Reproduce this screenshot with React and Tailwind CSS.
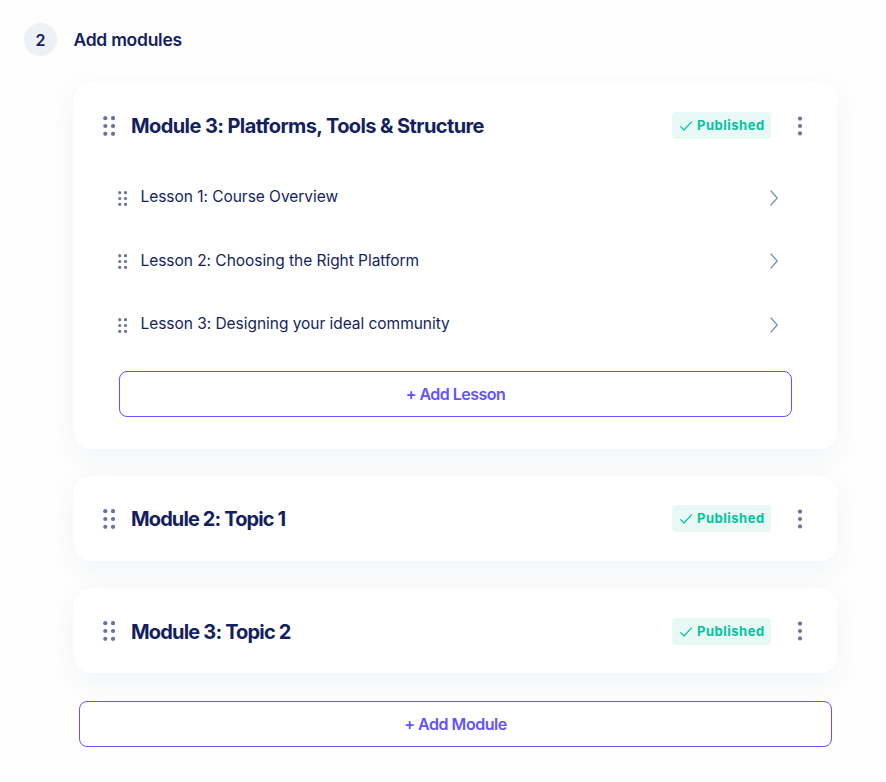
const modules = [
  {
    title: "Module 3: Platforms, Tools & Structure",
    titleClass: "tracking-[-0.59px]",
    lessons: [
      "Lesson 1: Course Overview",
      "Lesson 2: Choosing the Right Platform",
      "Lesson 3: Designing your ideal community",
    ],
  },
  { title: "Module 2: Topic 1", titleClass: "tracking-[-0.88px]" },
  { title: "Module 3: Topic 2", titleClass: "tracking-[-0.82px]" },
];

const DragHandle = ({ className }) => (
  <svg viewBox="0 0 12 20" className={className} fill="currentColor">
    {[2.3, 10].map((cx) =>
      [2.2, 10, 17.8].map((cy) => <circle key={`${cx}-${cy}`} cx={cx} cy={cy} r="2.1" />)
    )}
  </svg>
);

const Kebab = () => (
  <svg viewBox="0 0 4 20" className="w-1 h-5 overflow-visible text-[#68739f]" fill="currentColor">
    <circle cx="2" cy="2.6" r="2.1" />
    <circle cx="2" cy="10" r="2.1" />
    <circle cx="2" cy="17.4" r="2.1" />
  </svg>
);

const PublishedTag = () => (
  <span className="flex items-center w-[99px] h-[27px] pl-2 gap-[5px] rounded bg-[#e8f8f5] text-[#05c3a0]">
    <svg viewBox="0 0 12 10" className="w-3 h-2.5 mt-px shrink-0" fill="none" stroke="currentColor" strokeWidth="1.2" strokeLinecap="round" strokeLinejoin="round">
      <path d="M0.6 5.6 4 9 11.5 0.9" />
    </svg>
    <span className="text-[13px] leading-none font-bold tracking-[0.5px]">Published</span>
  </span>
);

const LessonRow = ({ title }) => (
  <li className="flex items-center h-[63.7px] pl-[44px] pr-[59px]">
    <DragHandle className="w-[9px] h-[15px] mt-0.5 text-[#68739f]" />
    <span className="ml-[13.5px] -mt-px flex-1 text-[15.5px] tracking-[-0.04px]">{title}</span>
    <svg viewBox="0 0 9 16" className="w-[9px] h-4 mt-px text-[#8694b8]" fill="none" stroke="currentColor" strokeWidth="1.4" strokeLinecap="round" strokeLinejoin="round">
      <path d="M2 1 8.2 8 2 15" />
    </svg>
  </li>
);

const OutlineButton = ({ children, className }) => (
  <button className={`block h-[46px] rounded-lg border border-[#6454fb] bg-white text-[#6454fb] text-base font-semibold ${className}`}>
    {children}
  </button>
);

const ModuleCard = ({ title, titleClass, lessons }) => (
  <section className="bg-white rounded-2xl shadow-[0_8px_32px_rgba(30,60,110,0.06)]">
    <header className="flex items-center h-[85.2px] pl-[29px] pr-[35px]">
      <DragHandle className="w-3 h-5 text-[#68739f]" />
      <h2 className={`ml-4 pt-px flex-1 text-xl font-bold ${titleClass}`}>{title}</h2>
      <PublishedTag />
      <span className="ml-[27px]">
        <Kebab />
      </span>
    </header>
    {lessons && (
      <>
        <ul className="-mt-[3px]">
          {lessons.map((lesson) => (
            <LessonRow key={lesson} title={lesson} />
          ))}
        </ul>
        <OutlineButton className="w-[673px] ml-[45px] mt-[14.7px] tracking-[-0.52px]">+ Add Lesson</OutlineButton>
      </>
    )}
  </section>
);

const App = () => {
  return (
    <div className="w-full h-[782px] overflow-hidden bg-[#fefefe] text-[#141f5e] font-['Inter',sans-serif]">
      <div className="flex items-center pt-[23px] pl-6">
        <span className="flex items-center justify-center w-[33px] h-[33px] rounded-full bg-[#edf1f6] font-semibold text-base">2</span>
        <h1 className="ml-[16.5px] text-[17.5px] leading-[33px] font-semibold tracking-[-0.27px]">Add modules</h1>
      </div>

      <main className="flex flex-col w-[763px] ml-[74px] mt-[27px]">
        {/* Expanded module */}
        <div className="h-[393.4px] [&>section]:h-[366px]">
          <ModuleCard {...modules[0]} />
        </div>

        {/* Collapsed modules */}
        <div className="flex flex-col gap-7 [&>section]:h-[84.5px]">
          {modules.slice(1).map((module) => (
            <ModuleCard key={module.title} {...module} />
          ))}
        </div>

        <OutlineButton className="w-[753px] ml-[5px] mt-[27.6px] tracking-[-0.45px]">+ Add Module</OutlineButton>
      </main>
    </div>
  );
};

export default App;
